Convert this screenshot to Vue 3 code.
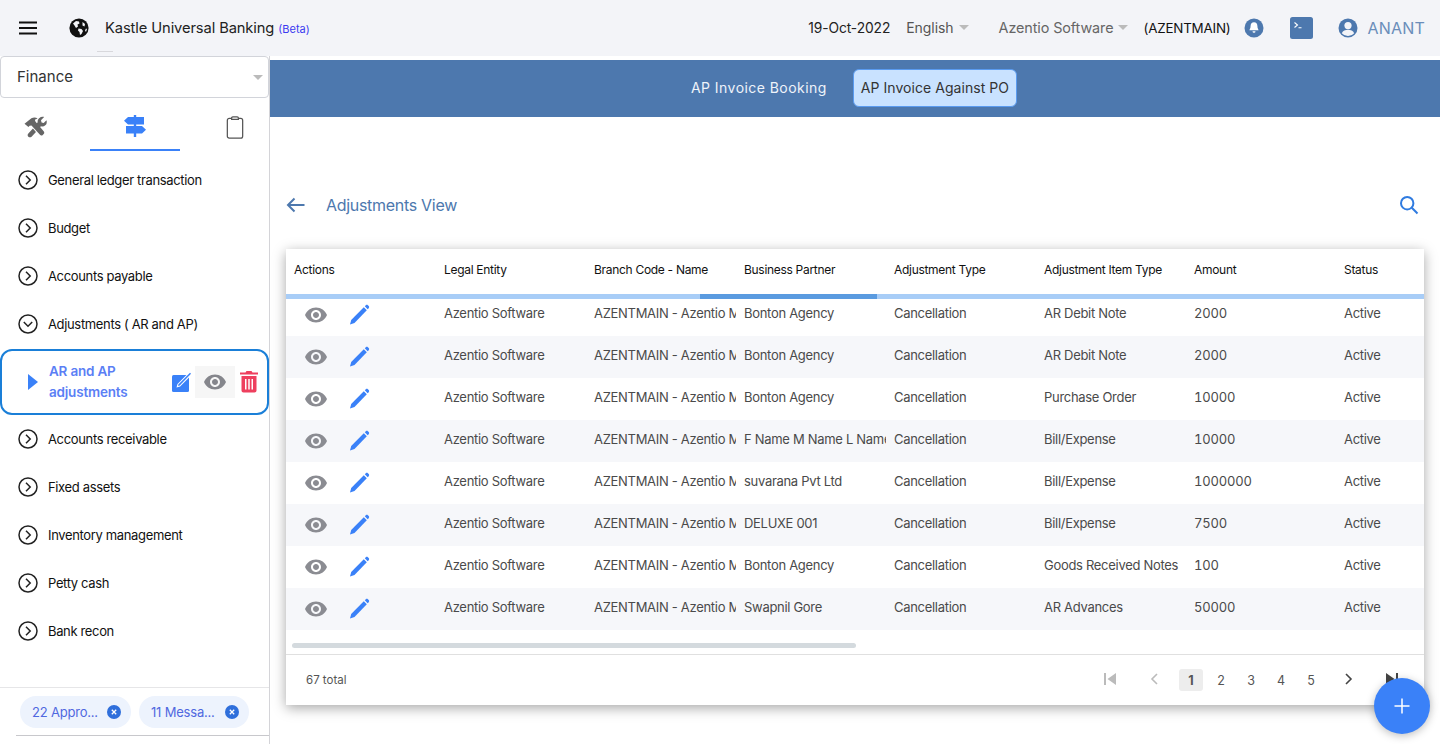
<script setup>
const menuTop = ["General ledger transaction", "Budget", "Accounts payable"];
const menuBottom = ["Accounts receivable", "Fixed assets", "Inventory management", "Petty cash", "Bank recon"];
const columns = ["Actions", "Legal Entity", "Branch Code - Name", "Business Partner", "Adjustment Type", "Adjustment Item Type", "Amount", "Status"];
const rows = [
  ["Bonton Agency", "AR Debit Note", "2000"],
  ["Bonton Agency", "AR Debit Note", "2000"],
  ["Bonton Agency", "Purchase Order", "10000"],
  ["F Name M Name L Name", "Bill/Expense", "10000"],
  ["suvarana Pvt Ltd", "Bill/Expense", "1000000"],
  ["DELUXE 001", "Bill/Expense", "7500"],
  ["Bonton Agency", "Goods Received Notes", "100"],
  ["Swapnil Gore", "AR Advances", "50000"],
];
const eyePath = "M12 4.5C7 4.5 2.73 7.61 1 12c1.73 4.39 6 7.5 11 7.5s9.27-3.11 11-7.5c-1.73-4.39-6-7.5-11-7.5zM12 17c-2.76 0-5-2.24-5-5s2.24-5 5-5 5 2.24 5 5-2.24 5-5 5zm0-8c-1.66 0-3 1.34-3 3s1.34 3 3 3 3-1.34 3-3-1.34-3-3-3z";
</script>

<template>
  <div class="page">
    <header class="topbar">
      <div class="top-left">
        <svg class="menu-icon" width="20" height="14" viewBox="0 0 20 14"><path d="M1 1.5h18M1 7h18M1 12.5h18" stroke="#111" stroke-width="2"/></svg>
        <svg class="globe" width="20" height="20" viewBox="0 0 20 20">
          <circle cx="10" cy="10" r="9.6" fill="#111"/>
          <path d="M4 5.5l3-2.5 3 .5.5 2-2 1 .5 2-2 1.5-1.5-2.5zM9.5 10.5l3 .5 1.5 2-1.5 3-1.5 1-.5-3-1.5-1.5zM13.5 4l2.5 2-.5 2.5-2-1zM17 10.5l1 .5-1 3-1-1.5z" fill="#f3f4f8"/>
        </svg>
        <span class="brand">Kastle Universal Banking</span>
        <span class="beta">(Beta)</span>
      </div>
      <div class="top-right">
        <span class="date">19-Oct-2022</span>
        <span class="drop lang">English<i class="caret"></i></span>
        <span class="drop company">Azentio Software<i class="caret"></i></span>
        <span class="code">(AZENTMAIN)</span>
        <svg class="bell" width="20" height="20" viewBox="0 0 20 20">
          <circle cx="10" cy="10" r="9.5" fill="#4d78ae"/>
          <path d="M10 4.2c-2.2 0-3.4 1.7-3.4 3.8 0 2.6-1.2 3.6-1.2 4.2h9.2c0-.6-1.2-1.6-1.2-4.2 0-2.1-1.2-3.8-3.4-3.8zM8.5 13.2a1.5 1.5 0 0 0 3 0z" fill="#fff"/>
        </svg>
        <svg class="term" width="23" height="22" viewBox="0 0 23 22">
          <rect width="23" height="22" rx="2.5" fill="#4d78ae"/>
          <path d="M4.500 5.500l3 2.500-3 2.500M8.500 10.800h3" stroke="#fff" stroke-width="1.100" fill="none"/>
        </svg>
        <svg class="user" width="20" height="20" viewBox="0 0 20 20">
          <circle cx="10" cy="10" r="9.5" fill="#4d78ae"/>
          <circle cx="10" cy="7.6" r="3.6" fill="#f3f4f8"/>
          <path d="M3.800 15.200c1.200-2.400 3.500-3.400 6.200-3.400s5 1 6.200 3.400A8 8 0 0 1 10 18a8 8 0 0 1-6.200-2.800z" fill="#f3f4f8"/>
        </svg>
        <span class="username">ANANT</span>
      </div>
    </header>
    <i class="tick"></i>

    <div class="body">
      <aside class="sidebar">
        <div class="select">Finance<i class="caret select-caret"></i></div>
        <div class="tabs">
          <div class="tab tab-side">
            <svg width="25" height="22" viewBox="0 0 26 24" fill="#666">
              <path d="M1 8.500L8.500 2.500c2.500-1.400 5-1.200 6.800.3l-3 1.200.6 2 9 10.500c.9 1 .9 2.200 0 3.100l-1 1c-1 .9-2.200.8-3-.1L8.600 10.400l-2 .1-1.300 1.500z"/>
              <path d="M25 4.500c.7 2.200.2 4.300-1.300 5.700-1.300 1.200-3 1.600-4.700 1.100l-2.800 2.400-3.500-4 2.700-2.800c-.3-1.800.2-3.300 1.500-4.500C18.700 1.100 20.600.6 22.400 1.200L19 4.500l.6 2.600 2.300.6zM10.200 13.700l3.300 3.800-4.800 5c-1 1-2.500 1-3.500 0-1-1-1-2.500 0-3.500z"/>
            </svg>
          </div>
          <div class="tab tab-active">
            <svg width="24" height="22" viewBox="0 0 24 22" fill="#3a81f8">
              <path d="M10.800 0h2.400v22h-2.400z"/>
              <path d="M5 2h16v7.500H5L1 5.750zM3 11h16l4 3.750-4 3.750H3z"/>
            </svg>
          </div>
          <div class="tab tab-side">
            <svg width="18" height="23" viewBox="0 0 18 24" fill="none" stroke="#555" stroke-width="1.300">
              <rect x="1" y="2.600" width="16" height="20.400" rx="2"/>
              <path d="M5.500 3.400V2.200C5.500 1.500 6 1 6.700 1h4.600c.7 0 1.200.5 1.200 1.200v1.200z" fill="#fff"/>
            </svg>
          </div>
        </div>

        <nav class="menu">
          <div v-for="item in menuTop" :key="item" class="menu-item">
            <svg width="20" height="20" viewBox="0 0 20 20" fill="none" stroke="#222" stroke-width="1.500"><circle cx="10" cy="10" r="9"/><path d="M8 5.800l4.200 4.200L8 14.200"/></svg>
            <span>{{ item }}</span>
          </div>
          <div class="menu-item">
            <svg width="20" height="20" viewBox="0 0 20 20" fill="none" stroke="#222" stroke-width="1.500"><circle cx="10" cy="10" r="9"/><path d="M5.800 8l4.200 4.200L14.200 8"/></svg>
            <span>Adjustments ( AR and AP)</span>
          </div>
          <div class="menu-active">
            <i class="play"></i>
            <span class="active-label">AR and AP adjustments</span>
            <svg class="act-edit" width="21" height="21" viewBox="0 0 21 21">
              <rect x="0" y="4" width="17" height="17" rx="1.500" fill="#3a81f8"/>
              <path d="M4.500 16.500l1-3.600L17.400 1l2.600 2.600L8.100 15.500z" fill="#fff"/>
              <path d="M6 15l.6-1.700L18 1.800l1 1L7.700 14.400z" fill="#3a81f8"/>
            </svg>
            <span class="act-eye"><svg width="24" height="24" viewBox="0 0 24 24" fill="#85868c"><path :d="eyePath"/></svg></span>
            <svg class="act-del" width="18" height="22" viewBox="0 0 18 22" fill="#ee3f5e">
              <path d="M6.500 0h5L12.500 1.500H18V3.500H0V1.500H5.500z"/>
              <path fill-rule="evenodd" d="M1.500 5h15v14.500c0 1.200-.9 2-2 2h-11c-1.100 0-2-.8-2-2zM5 8v10.500h1.500V8zM8.250 8v10.500h1.500V8zM11.500 8v10.500H13V8z"/>
            </svg>
          </div>
          <div v-for="item in menuBottom" :key="item" class="menu-item">
            <svg width="20" height="20" viewBox="0 0 20 20" fill="none" stroke="#222" stroke-width="1.500"><circle cx="10" cy="10" r="9"/><path d="M8 5.800l4.200 4.200L8 14.200"/></svg>
            <span>{{ item }}</span>
          </div>
        </nav>

        <div class="chips">
          <span class="chip">22 Appro...<svg width="14" height="14" viewBox="0 0 14 14"><circle cx="7" cy="7" r="7" fill="#2f6fdb"/><path d="M4.800 4.800l4.400 4.400M9.200 4.800l-4.400 4.400" stroke="#fff" stroke-width="1.300"/></svg></span>
          <span class="chip">11 Messa...<svg width="14" height="14" viewBox="0 0 14 14"><circle cx="7" cy="7" r="7" fill="#2f6fdb"/><path d="M4.800 4.800l4.400 4.400M9.200 4.800l-4.400 4.400" stroke="#fff" stroke-width="1.300"/></svg></span>
        </div>
        <div class="side-end"></div>
      </aside>

      <main class="main">
        <div class="banner">
          <span class="banner-tab">AP Invoice Booking</span>
          <span class="banner-tab banner-on">AP Invoice Against PO</span>
        </div>
        <div class="title-row">
          <svg width="20" height="16" viewBox="0 0 20 16" fill="none" stroke="#4d78ae" stroke-width="2"><path d="M18.500 8H2M8.500 1.500L2 8l6.500 6.500"/></svg>
          <span class="title">Adjustments View</span>
          <svg class="search" width="20" height="20" viewBox="0 0 20 20" fill="none" stroke="#2f7be0" stroke-width="2"><circle cx="8.200" cy="8.200" r="6.200"/><path d="M12.800 12.800l5.700 5.700"/></svg>
        </div>

        <section class="card">
          <div class="grid head">
            <div v-for="c in columns" :key="c" class="cell">{{ c }}</div>
          </div>
          <div class="rule"><i class="rule-thumb"></i></div>
          <div v-for="(r, i) in rows" :key="i" class="grid row" :class="{ alt: i % 2 === 1 }">
            <div class="cell actions">
              <svg width="24" height="24" viewBox="0 0 24 24" fill="#8b8c92"><path :d="eyePath"/></svg>
              <svg width="22" height="22" viewBox="0 0 22 22"><path d="M2 20.500l1.200-4.600L15.800 3.300l3 3L6.500 19z" fill="#3a81f8"/><path d="M16.800 2.300l1-1c.6-.6 1.500-.6 2.100 0l.8.800c.6.600.6 1.500 0 2.100l-1 1z" fill="#3a81f8"/></svg>
            </div>
            <div class="cell">Azentio Software</div>
            <div class="cell">AZENTMAIN - Azentio Main Branch</div>
            <div class="cell">{{ r[0] }}</div>
            <div class="cell">Cancellation</div>
            <div class="cell">{{ r[1] }}</div>
            <div class="cell amount">{{ r[2] }}</div>
            <div class="cell">Active</div>
          </div>
          <div class="scroll"><i class="scroll-thumb"></i></div>
          <footer class="pager">
            <span class="total">67 total</span>
            <div class="pages">
              <svg class="p-first" width="12" height="12" viewBox="0 0 12 12" fill="#bbb"><path d="M0 0h2v12H0zM12 0v12L3.500 6z"/></svg>
              <svg class="p-prev" width="8" height="12" viewBox="0 0 8 12" fill="none" stroke="#bbb" stroke-width="1.600"><path d="M7 1L2 6l5 5"/></svg>
              <span class="num on">1</span>
              <span class="num">2</span>
              <span class="num">3</span>
              <span class="num">4</span>
              <span class="num">5</span>
              <svg class="p-next" width="8" height="12" viewBox="0 0 8 12" fill="none" stroke="#444" stroke-width="1.600"><path d="M1 1l5 5-5 5"/></svg>
              <svg class="p-last" width="12" height="12" viewBox="0 0 12 12" fill="#444"><path d="M0 0v12l8.500-6zM10 0h2v12h-2z"/></svg>
            </div>
          </footer>
        </section>
      </main>
    </div>

    <button class="fab" type="button">
      <svg width="16" height="16" viewBox="0 0 16 16" stroke="#fff" stroke-width="1.500"><path d="M8 .5v15M.5 8h15"/></svg>
    </button>
  </div>
</template>

<style scoped>
.page {
  width: 1440px;
  height: 744px;
  overflow: hidden;
  position: relative;
  background: #fff;
  font-family: Inter, "Liberation Sans", sans-serif;
  color: #111;
}

.topbar {
  height: 56px;
  background: #f3f4f8;
  display: flex;
  align-items: center;
  justify-content: space-between;
  padding: 0 15px 0 18px;
}

.top-left,
.top-right {
  display: flex;
  align-items: center;
}

.globe {
  margin-left: 31px;
}

.brand {
  margin-left: 16px;
  font-size: 14.7px;
  color: #222;
  letter-spacing: -0.1px;
  margin-bottom: 1px;
}

.beta {
  margin-left: 4px;
  font-size: 11px;
  color: #3b3bf0;
  margin-top: 2px;
}

.date {
  font-size: 13.8px;
  color: #222;
  letter-spacing: -0.1px;
  margin-bottom: 1px;
}

.drop {
  font-size: 14px;
  color: #555;
  letter-spacing: -0.1px;
  display: flex;
  align-items: center;
  margin-bottom: 1px;
}

.lang {
  margin-left: 16px;
  letter-spacing: -0.05px;
}

.company {
  margin-left: 30px;
  color: #666;
  font-size: 14.4px;
}

.caret {
  width: 0;
  height: 0;
  border-left: 5px solid transparent;
  border-right: 5px solid transparent;
  border-top: 5px solid #bbb;
  margin-left: 5px;
  display: block;
}

.code {
  margin-left: 15px;
  font-size: 13.4px;
  letter-spacing: -0.2px;
  color: #111;
}

.bell {
  margin-left: 14px;
}

.term {
  margin-left: 26px;
}

.user {
  margin-left: 25px;
}

.username {
  margin-left: 9px;
  font-size: 16px;
  color: #6a8dba;
  letter-spacing: 0.2px;
}

.tick {
  position: absolute;
  left: 97px;
  top: 51px;
  width: 16px;
  height: 1px;
  background: #d8d8dc;
}

.body {
  display: flex;
  height: 688px;
}

.sidebar {
  width: 270px;
  flex: none;
  border-right: 1px solid #d4d4d8;
  box-sizing: border-box;
  display: flex;
  flex-direction: column;
  position: relative;
}

.select {
  height: 42px;
  box-sizing: border-box;
  width: 269px;
  border: 1px solid #d2d4da;
  border-radius: 4px;
  background: #fff;
  display: flex;
  align-items: center;
  padding: 0 0 2px 16px;
  font-size: 15px;
  color: #333;
  position: relative;
}

.select-caret {
  position: absolute;
  right: 5px;
  top: 18px;
}

.tabs {
  height: 53px;
  display: flex;
  gap: 20px;
}

.tab {
  flex: none;
  display: flex;
  justify-content: center;
  align-items: center;
  box-sizing: border-box;
}

.tab-side {
  width: 70px;
  padding-top: 5px;
}

.tab-active {
  width: 90px;
  padding-top: 4px;
  border-bottom: 2px solid #3a81f8;
}

.menu {
  padding-top: 5px;
  flex: 1;
}

.menu-item {
  height: 48px;
  display: flex;
  align-items: center;
  padding-left: 18px;
  gap: 10px;
  font-size: 13px;
  letter-spacing: -0.35px;
  color: #111;
}

.menu-active {
  height: 66px;
  margin-top: 1px;
  width: 269px;
  box-sizing: border-box;
  border: 2px solid #1a7fd8;
  border-radius: 12px;
  display: flex;
  align-items: center;
  position: relative;
  padding-left: 26px;
}

.play {
  width: 0;
  height: 0;
  border-top: 8px solid transparent;
  border-bottom: 8px solid transparent;
  border-left: 10px solid #3a81f8;
}

.active-label {
  width: 100px;
  margin-left: 11px;
  font-size: 13.5px;
  font-weight: 600;
  line-height: 21px;
  color: #5b7ff5;
  letter-spacing: -0.2px;
}

.act-edit {
  margin-left: 23px;
  margin-top: -1px;
}

.act-eye {
  width: 40px;
  height: 32px;
  background: #f6f6f6;
  margin-left: 2px;
  display: flex;
  align-items: center;
  justify-content: center;
}

.act-del {
  margin-left: 5px;
}

.chips {
  border-top: 1px solid #e6e6e8;
  height: 48px;
  box-sizing: border-box;
  margin-top: auto;
  padding: 8px 0 0 20px;
  display: flex;
  gap: 8px;
}

.chip {
  height: 32px;
  box-sizing: border-box;
  border-radius: 16px;
  background: #edf3fd;
  color: #5068e0;
  font-size: 13px;
  letter-spacing: -0.2px;
  display: flex;
  align-items: center;
  justify-content: space-between;
  padding: 0 10px 0 12px;
  width: 111px;
}

.chip + .chip {
  width: 110px;
}

.side-end {
  margin-left: 16px;
  border-top: 1px solid #c8c8cc;
  height: 8px;
}

.main {
  flex: 1;
  min-width: 0;
  padding-top: 4px;
}

.banner {
  height: 57px;
  background: #4d78ae;
  display: flex;
  align-items: center;
  justify-content: center;
  gap: 26px;
  padding: 0 2px 2px 0;
  box-sizing: border-box;
}

.banner-tab {
  color: #eef3fa;
  font-size: 14px;
  letter-spacing: 0.45px;
}

.banner-on {
  background: #c9e2ff;
  border: 1px solid #5a9bf0;
  border-radius: 6px;
  color: #333;
  height: 38px;
  display: flex;
  align-items: center;
  padding: 0 7px;
  box-sizing: border-box;
  letter-spacing: 0.05px;
}

.title-row {
  height: 132px;
  box-sizing: border-box;
  display: flex;
  align-items: center;
  padding: 44px 21px 0 16px;
}

.title {
  margin-left: 20px;
  font-size: 16px;
  letter-spacing: -0.3px;
  color: #4d78ae;
}

.search {
  margin-left: auto;
}

.card {
  margin-left: 16px;
  width: 1138px;
  height: 456px;
  box-shadow: 0 3px 12px rgba(0, 0, 0, 0.35);
  background: #fff;
  overflow: hidden;
}

.grid {
  display: grid;
  grid-template-columns: repeat(7, 150px) 88px;
  align-items: center;
}

.head {
  height: 45px;
  padding-bottom: 4px;
  box-sizing: border-box;
  font-size: 12px;
  color: #111;
  letter-spacing: -0.3px;
}

.cell {
  padding-left: 8px;
  padding-right: 4px;
  white-space: nowrap;
  overflow: hidden;
}

.rule {
  height: 5px;
  background: #a8cdf7;
  position: relative;
  margin-bottom: -5px;
  z-index: 1;
}

.rule-thumb {
  position: absolute;
  left: 414px;
  width: 177px;
  top: 0;
  height: 5px;
  background: #5a9be0;
}

.row {
  height: 42px;
  box-sizing: border-box;
  padding-bottom: 4px;
  font-size: 13px;
  letter-spacing: -0.3px;
  color: #4a4a4a;
}

.amount {
  font-variant-numeric: tabular-nums;
  letter-spacing: -0.2px;
}

.alt {
  background: #f6f7fa;
}

.actions {
  display: flex;
  align-items: center;
  gap: 20px;
  padding-left: 18px;
  overflow: visible;
  padding-top: 3px;
}

.scroll {
  height: 24px;
  border-bottom: 1px solid #e0e0e0;
  position: relative;
}

.scroll-thumb {
  position: absolute;
  left: 6px;
  top: 13px;
  width: 564px;
  height: 5px;
  border-radius: 3px;
  background: #d4dade;
}

.pager {
  height: 50px;
  display: flex;
  align-items: center;
  justify-content: space-between;
  padding-left: 20px;
}

.total {
  font-size: 11.5px;
  color: #555;
}

.pages {
  display: flex;
  align-items: center;
  position: relative;
  width: 330px;
  height: 24px;
}

.pages svg {
  position: absolute;
  top: 5px;
}

.p-first {
  left: 10px;
}

.p-prev {
  left: 56px;
}

.p-next {
  left: 251px;
}

.p-last {
  left: 292px;
}

.num {
  position: relative;
  left: 85px;
  width: 24px;
  height: 22px;
  margin-right: 6px;
  display: flex;
  align-items: center;
  justify-content: center;
  font-size: 12.5px;
  color: #555;
  border-radius: 3px;
}

.on {
  background: #ededed;
  font-weight: 700;
}

.fab {
  position: absolute;
  left: 1374px;
  top: 678px;
  width: 56px;
  height: 56px;
  border: none;
  border-radius: 50%;
  background: #3a81f8;
  box-shadow: 0 2px 8px rgba(0, 0, 0, 0.25);
  display: flex;
  align-items: center;
  justify-content: center;
  padding: 0;
}
</style>
